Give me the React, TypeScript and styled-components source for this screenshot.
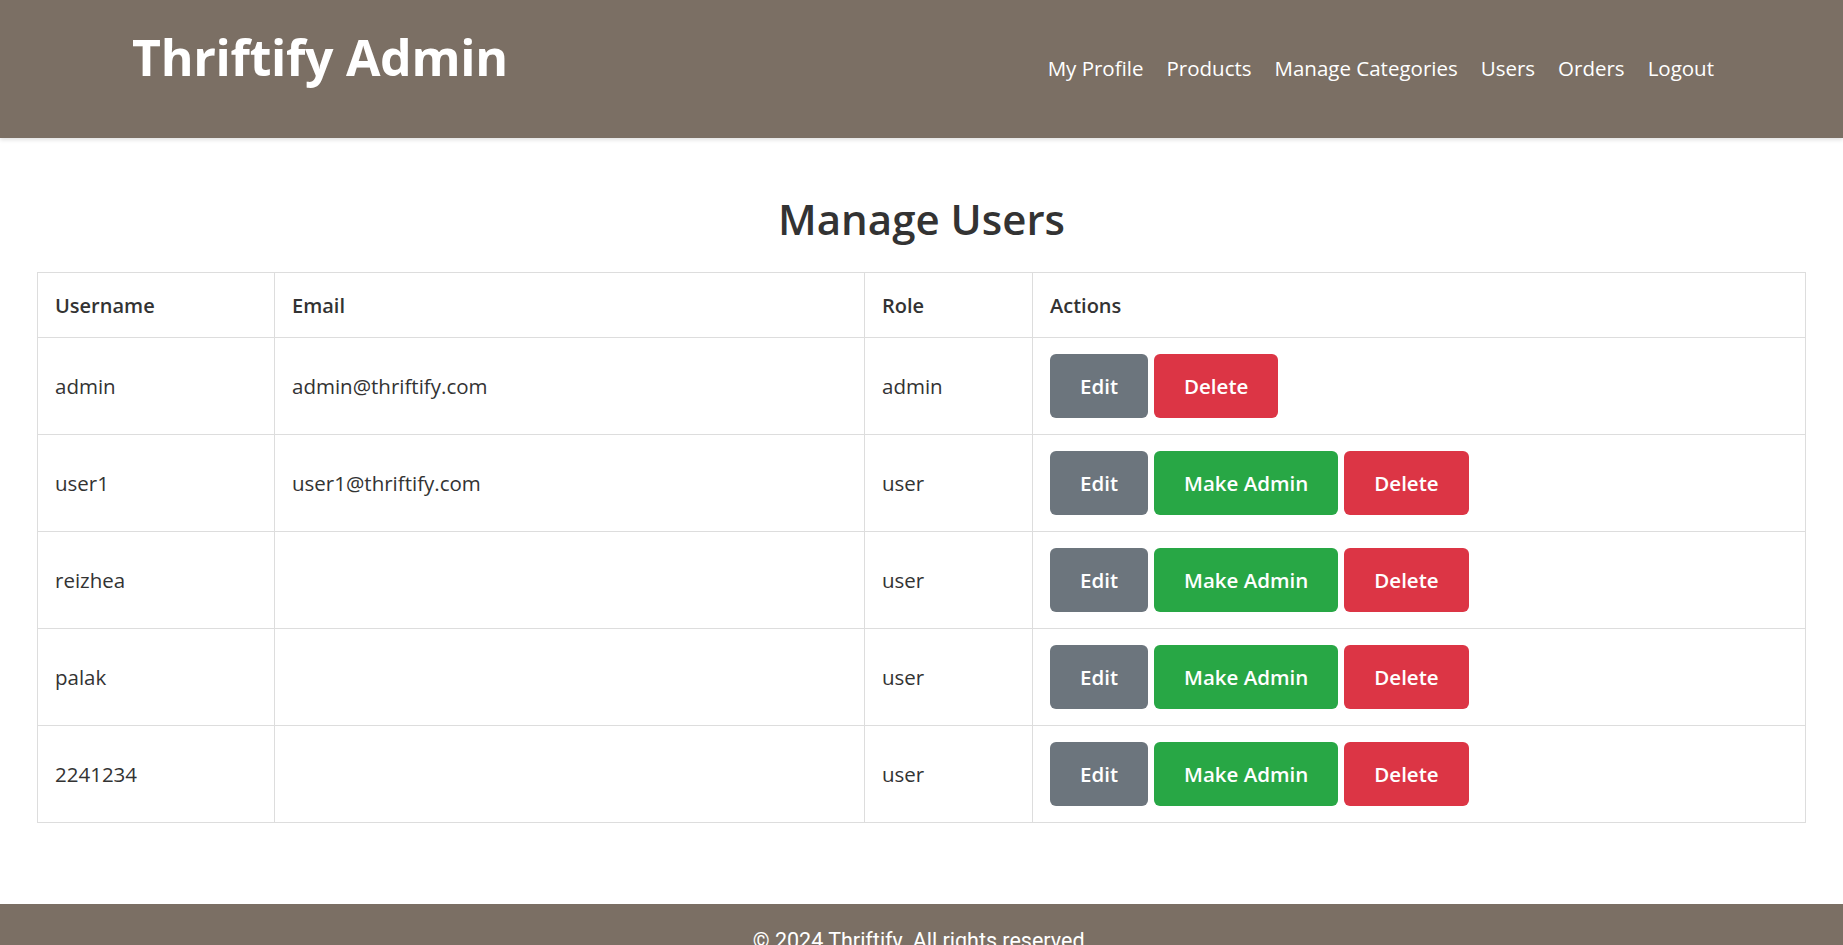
import * as React from 'react'
import styled, { createGlobalStyle } from 'styled-components'

const GlobalStyle = createGlobalStyle`
  html, body {
    margin: 0;
    padding: 0;
    background: #fff;
    font-family: 'Open Sans', 'Noto Sans', Arial, sans-serif;
    color: #333;
  }
  * { box-sizing: border-box; }
`

const brown = '#7b6f64'

const Header = styled.header`
  height: 138px;
  background-color: ${brown};
  padding: 22px 129px 0 132px;
  display: flex;
  justify-content: space-between;
  align-items: baseline;
  box-shadow: 0 2px 4px rgba(0, 0, 0, 0.12);
  position: relative;
`
const Brand = styled.h1`
  margin: 0;
  font-size: 50px;
  line-height: 70px;
  font-weight: 700;
  color: #fff;
  letter-spacing: -0.3px;
`
const Nav = styled.nav`
  display: flex;
  gap: 23px;
`
const NavLink = styled.a`
  color: #fff;
  text-decoration: none;
  font-size: 20.5px;
  cursor: pointer;
`

const Main = styled.main`
  padding: 53px 37px 81px;
`
const Title = styled.h2`
  margin: 0 0 25px;
  text-align: center;
  font-size: 42px;
  line-height: 56px;
  font-weight: 600;
  color: #333;
`
const Table = styled.table`
  width: 100%;
  border-collapse: collapse;
  table-layout: fixed;
`
const Th = styled.th<{ $w?: number }>`
  width: ${p => (p.$w ? `${p.$w}px` : 'auto')};
  text-align: left;
  font-weight: 600;
  font-size: 20px;
  color: #333;
  padding: 0 17px;
  height: 65px;
  border: 1px solid #ddd;
`
const Td = styled.td`
  font-size: 20.5px;
  color: #333;
  padding: 0 17px;
  height: 97px;
  border: 1px solid #ddd;
`
const Actions = styled.div`
  display: flex;
  gap: 6px;
`
const Btn = styled.button<{ $tone: 'gray' | 'green' | 'red' }>`
  font-family: inherit;
  font-size: 20.5px;
  font-weight: 600;
  color: #fff;
  border: none;
  border-radius: 6px;
  height: 64px;
  padding: 0 30px;
  cursor: pointer;
  background-color: ${p =>
    p.$tone === 'gray' ? '#6c757d' : p.$tone === 'green' ? '#28a745' : '#dc3545'};
`

const Footer = styled.footer`
  background-color: ${brown};
  color: #fff;
  text-align: center;
  padding: 24px 0 30px;
  font-family: Roboto, 'Liberation Sans', Arial, sans-serif;
  font-size: 21.5px;
  line-height: 26px;
`

const users = [
  { name: 'admin', email: 'admin@thriftify.com', role: 'admin' },
  { name: 'user1', email: 'user1@thriftify.com', role: 'user' },
  { name: 'reizhea', email: '', role: 'user' },
  { name: 'palak', email: '', role: 'user' },
  { name: '2241234', email: '', role: 'user' },
]

export default function App() {
  return (
    <>
      <GlobalStyle />
      <Header>
        <Brand>Thriftify Admin</Brand>
        <Nav>
          <NavLink>My Profile</NavLink>
          <NavLink>Products</NavLink>
          <NavLink>Manage Categories</NavLink>
          <NavLink>Users</NavLink>
          <NavLink>Orders</NavLink>
          <NavLink>Logout</NavLink>
        </Nav>
      </Header>
      <Main>
        <Title>Manage Users</Title>
        <Table>
          <thead>
            <tr>
              <Th $w={237}>Username</Th>
              <Th $w={590}>Email</Th>
              <Th $w={168}>Role</Th>
              <Th>Actions</Th>
            </tr>
          </thead>
          <tbody>
            {users.map(u => (
              <tr key={u.name}>
                <Td>{u.name}</Td>
                <Td>{u.email}</Td>
                <Td>{u.role}</Td>
                <Td>
                  <Actions>
                    <Btn $tone="gray">Edit</Btn>
                    {u.role !== 'admin' && <Btn $tone="green">Make Admin</Btn>}
                    <Btn $tone="red">Delete</Btn>
                  </Actions>
                </Td>
              </tr>
            ))}
          </tbody>
        </Table>
      </Main>
      <Footer>© 2024 Thriftify. All rights reserved.</Footer>
    </>
  )
}
